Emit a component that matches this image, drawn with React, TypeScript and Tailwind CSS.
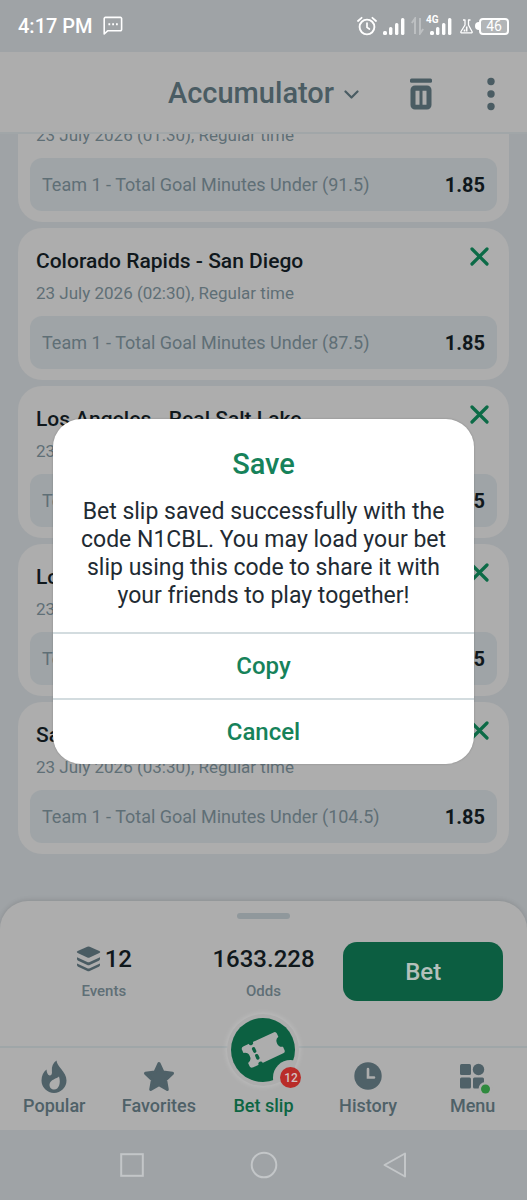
import { ReactNode } from "react";

type Bet = {
  id: number;
  teams: string;
  time: string;
  limit: string;
  odds: string;
};

const bets: Bet[] = [
  { id: 1, teams: "Austin - Seattle Sounders", time: "01:30", limit: "91.5", odds: "1.85" },
  { id: 2, teams: "Colorado Rapids - San Diego", time: "02:30", limit: "87.5", odds: "1.85" },
  { id: 3, teams: "Los Angeles - Real Salt Lake", time: "02:30", limit: "91.5", odds: "1.85" },
  { id: 4, teams: "Los Angeles - Portland", time: "02:30", limit: "91.5", odds: "1.85" },
  { id: 5, teams: "San Jose - Vancouver", time: "03:30", limit: "104.5", odds: "1.85" },
];

const Signal = () => (
  <svg width="22" height="17" viewBox="0 0 22 17" fill="currentColor">
    <rect x="0" y="13" width="4" height="4" rx="1.5" />
    <rect x="6" y="9" width="3.4" height="8" rx="1.5" />
    <rect x="12" y="5" width="3.4" height="12" rx="1.5" />
    <rect x="18" y="0" width="3.4" height="17" rx="1.5" />
  </svg>
);

const StatusBar = () => (
  <div className="flex h-[52px] items-center justify-between px-[18px] text-white">
    <div className="flex items-center gap-2.5">
      <span className="text-xl font-medium">4:17 PM</span>
      <svg width="20" height="20" viewBox="0 0 20 20" fill="none" stroke="currentColor">
        <path d="M1.2 18V2.6A1.2 1.2 0 0 1 2.4 1.4h15a1.2 1.2 0 0 1 1.2 1.2v11a1.2 1.2 0 0 1-1.2 1.2H4.6z" strokeWidth="1.6" strokeLinejoin="round" />
        <path d="M5.4 8.2h1.8M9.2 8.2H11M13 8.2h1.8" strokeWidth="2" />
      </svg>
    </div>
    <div className="flex items-center">
      <svg width="20" height="20" viewBox="0 0 20 20" fill="none" stroke="currentColor" strokeLinecap="round">
        <circle cx="10" cy="11" r="7.4" strokeWidth="1.9" />
        <path d="M10 7v4.4l2.4 1.6" strokeWidth="1.7" />
        <path d="M1 5l3.6-3.2M19 5l-3.6-3.2" strokeWidth="1.8" />
      </svg>
      <span className="ml-1.5">
        <Signal />
      </span>
      <svg className="ml-1.5 opacity-30" width="13" height="18" viewBox="0 0 13 18" fill="none" stroke="currentColor" strokeWidth="2">
        <path d="M0.8 6L4 1.5V17M12.2 12L9 16.5V1" />
      </svg>
      <span className="relative ml-1.5">
        <Signal />
        <span className="absolute -top-1 -left-1 text-[10px] leading-3 font-bold">4G</span>
      </span>
      <svg className="ml-2" width="13" height="15" viewBox="0 0 13 15" fill="none" stroke="currentColor" strokeWidth="1.3" strokeLinejoin="round">
        <path d="M3 1h2v5L1 12.5q-.6 1.4 1 1.4h9q1.6 0 1-1.4L8.5 6V1h2" />
        <path d="M6.7 7.5v5M4.5 10.500v2" strokeWidth="1.6" />
      </svg>
      <span className="ml-0.5 h-2 w-1 rounded-l-sm bg-white" />
      <span className="flex h-[17px] w-[30px] items-center justify-center rounded border-2 border-white bg-white/20 text-sm leading-3">
        46
      </span>
    </div>
  </div>
);

const Header = () => (
  <header className="relative z-10 flex h-[82px] items-center border-b-2 border-[#a1a6a8] bg-[#adadad] pt-1 text-[#4a5c63]">
    <div className="flex-1 pl-8" />
    <button className="flex items-center gap-2.5 text-[29px] font-medium">
      Accumulator
      <svg width="15" height="9" viewBox="0 0 15 9" fill="none" stroke="currentColor" strokeWidth="2.2" strokeLinecap="round" strokeLinejoin="round">
        <path d="M1.5 1.500l6 6 6-6" />
      </svg>
    </button>
    <div className="flex flex-1 items-center justify-end gap-[55px] pr-8">
      <button aria-label="Clear bet slip">
        <svg width="22" height="32" viewBox="0 0 22 32" fill="currentColor">
          <rect x="0" y="0.5" width="22" height="4.2" rx="1.5" />
          <path fillRule="evenodd" d="M5 7.5h12a4.5 4.5 0 0 1 4.500 4.500v15a4.5 4.5 0 0 1-4.500 4.500H5A4.5 4.5 0 0 1 .5 27V12A4.5 4.5 0 0 1 5 7.5zM5.5 12.700v14h4v-14zM12.5 12.700v14h4v-14z" />
        </svg>
      </button>
      <button aria-label="More options">
        <svg width="8" height="34" viewBox="0 0 8 34" fill="currentColor">
          <circle cx="4" cy="4.5" r="3.7" />
          <circle cx="4" cy="17" r="3.7" />
          <circle cx="4" cy="29.5" r="3.7" />
        </svg>
      </button>
    </div>
  </header>
);

const BetCard = ({ bet }: { bet: Bet }) => (
  <li className="rounded-3xl bg-[#adadad] px-3 pt-[19px] pb-[11px]">
    <div className="flex items-start justify-between pr-2 pl-1.5">
      <div>
        <h3 className="text-[21px] leading-7 font-medium text-[#10181c]">{bet.teams}</h3>
        <p className="mt-1 text-[17px] leading-7 text-[#5f6f76]">
          23 July 2026 ({bet.time}), Regular time
        </p>
      </div>
      <button aria-label={`Remove ${bet.teams}`} className="text-[#0c6b47]">
        <svg width="19" height="19" viewBox="0 0 19 19" fill="none" stroke="currentColor" strokeWidth="3.2" strokeLinecap="round">
          <path d="M2 2l15 15M17 2L2 17" />
        </svg>
      </button>
    </div>
    <div className="mt-[9px] flex h-[53px] items-center justify-between rounded-xl bg-[#9fa4a7] px-3">
      <span className="text-lg text-[#5f6f76]">Team 1 - Total Goal Minutes Under ({bet.limit})</span>
      <span className="text-xl font-bold text-[#10181c]">{bet.odds}</span>
    </div>
  </li>
);

const Summary = () => (
  <div className="mt-[23px] grid grid-cols-3 items-center px-6 pb-[45px]">
    <div className="flex flex-col items-center">
      <div className="flex items-center gap-1 text-2xl leading-8 font-medium text-[#10181c]">
        <svg width="25" height="26" viewBox="0 0 25 26" className="text-[#4a5c63]" fill="currentColor">
          <path d="M11.3.7q1.200-.5 2.400 0l9.600 4.300q1.800 1 0 2l-9.600 4.600q-1.200.5-2.400 0L1.700 7Q0 6 1.700 5z" />
          <path d="M1 11.300l10.300 4.800q1.200.5 2.400 0L24 11.300v1.700q0 1.200-1.200 1.800l-9.100 4.300q-1.200.5-2.400 0l-9.100-4.300Q1 14.200 1 13z" />
          <path d="M1 17.500l10.300 4.800q1.200.5 2.400 0L24 17.500v1.500q0 1.200-1.200 1.800l-9.100 4.300q-1.200.5-2.400 0l-9.100-4.300Q1 20.200 1 19z" />
        </svg>
        12
      </div>
      <span className="mt-1.5 text-[15px] leading-5 font-medium text-[#5f6f76]">Events</span>
    </div>
    <div className="flex flex-col items-center">
      <span className="text-2xl leading-8 font-medium text-[#10181c]">1633.228</span>
      <span className="mt-1.5 text-[15px] leading-5 font-medium text-[#5f6f76]">Odds</span>
    </div>
    <button className="h-[59px] rounded-[14px] bg-[#0c5e41] text-2xl font-medium text-[#b4c0bb]">Bet</button>
  </div>
);

const NavItem = ({ label, children }: { label: string; children: ReactNode }) => (
  <a href="#" className="flex flex-col items-center text-lg leading-6 font-medium text-[#4f6168]">
    <span className="flex h-9 items-center">{children}</span>
    <span>{label}</span>
  </a>
);

const BottomNav = () => (
  <nav className="grid h-[84px] grid-cols-5 border-t-2 border-[#9fa6a8] px-0.5 pt-[10px]">
    <NavItem label="Popular">
      <svg width="26" height="33" viewBox="0 0 26 33" fill="currentColor">
        <path fillRule="evenodd" d="M15.5.5C15.8 7 25.5 11.5 25.5 20.500A12.5 12.5 0 0 1 .5 20.500C.5 15.500 2.500 12 5.500 9.500 5.700 12.500 6.500 14.700 8.500 15.500 10.800 15.500 11.200 13.500 10.900 11 10.500 6.500 12 3 15.500.5zM18 16.500C16 18.500 9 19.500 8.500 24.500 8.300 27.500 10.500 29.500 13.200 29.500 18 29.500 20 23 18 16.500z" />
      </svg>
    </NavItem>
    <NavItem label="Favorites">
      <svg width="32" height="31" viewBox="0 0 32 31" fill="currentColor" stroke="currentColor" strokeWidth="3" strokeLinejoin="round">
        <path d="M16 2.500l4 8.600 9.500 1.200-6.900 6.500 1.700 9.600L16 23.600l-8.300 4.800 1.700-9.600-6.900-6.500 9.500-1.200z" />
      </svg>
    </NavItem>
    <a href="#" className="relative flex flex-col items-center text-lg leading-6 font-medium text-[#0c6543]">
      <span className="absolute -top-11 rounded-full bg-[#adadad] p-1 shadow-[0_0_6px_rgba(255,255,255,0.25)]">
        <svg width="64" height="64" viewBox="0 0 64 64">
          <circle cx="32" cy="32" r="32" fill="#0c6041" />
          <g transform="rotate(-25 32 32)">
            <path
              fill="#adadad"
              d="M16 20.500h33q2.500 0 2.500 2.500v3.500q-4 1-4 5.500t4 5.500V41q0 2.500-2.500 2.500H16q-3 0-3-2.500v-3.500q4.500-1 4.500-5.500T13 26.500V23q0-2.500 3-2.500z"
            />
            <circle cx="24" cy="20.500" r="2.300" fill="#0c6041" />
            <circle cx="24" cy="43.500" r="2.300" fill="#0c6041" />
            <path d="M24 27v2.500M24 34.500v2.500" stroke="#0c6041" strokeWidth="3.400" strokeLinecap="round" />
          </g>
          <circle cx="59.500" cy="59.500" r="17.500" fill="#adadad" />
        </svg>
        <span className="absolute -right-0.5 -bottom-0.5 flex size-[21px] items-center justify-center rounded-full bg-[#b92c29] text-xs font-medium text-[#d4c0c0]">
          12
        </span>
      </span>
      <span className="mt-9">Bet slip</span>
    </a>
    <NavItem label="History">
      <svg width="28" height="28" viewBox="0 0 28 28">
        <circle cx="14" cy="14" r="13.700" fill="currentColor" />
        <path d="M14 7v8.500h6" fill="none" stroke="#adadad" strokeWidth="2.600" strokeLinecap="round" />
      </svg>
    </NavItem>
    <NavItem label="Menu">
      <svg className="overflow-visible" width="32" height="32" viewBox="0 0 32 32" fill="currentColor">
        <rect x="3" y="4" width="11" height="11" rx="1.500" />
        <circle cx="21.500" cy="9.500" r="5.700" />
        <rect x="3" y="17.500" width="11" height="11" rx="1.500" />
        <rect x="16" y="17.500" width="11" height="11" rx="1.500" />
        <circle cx="28.500" cy="29" r="7" fill="#adadad" />
        <circle cx="28.500" cy="29" r="4.500" className="fill-[#2f8a3e]" />
      </svg>
    </NavItem>
  </nav>
);

const SystemBar = () => (
  <div className="bg-[#9fa3a6]">
    <div className="mx-auto grid h-[70px] w-3/4 grid-cols-3 place-items-center text-[#c3c6c8]">
      <button aria-label="Recent apps">
        <svg width="24" height="24" viewBox="0 0 24 24" fill="none" stroke="currentColor" strokeWidth="2">
          <rect x="1.200" y="1.200" width="21.600" height="21.600" />
        </svg>
      </button>
      <button aria-label="Home">
        <svg width="28" height="28" viewBox="0 0 28 28" fill="none" stroke="currentColor" strokeWidth="2">
          <circle cx="14" cy="14" r="12.300" />
        </svg>
      </button>
      <button aria-label="Back">
        <svg width="24" height="26" viewBox="0 0 24 26" fill="none" stroke="currentColor" strokeWidth="2" strokeLinejoin="round">
          <path d="M22 1.500v23L1.500 13z" />
        </svg>
      </button>
    </div>
  </div>
);

const SaveDialog = () => (
  <div className="absolute inset-0 z-20 flex items-center justify-center pb-[18px]">
    <div
      role="dialog"
      aria-labelledby="save-title"
      className="w-4/5 overflow-hidden rounded-[28px] bg-white text-center shadow-[0_0_2px_rgba(0,0,0,0.25)]"
    >
      <div className="px-5 pt-[27px] pb-[22px]">
        <h2 id="save-title" className="text-[29px] leading-9 font-medium text-[#16825a]">
          Save
        </h2>
        <p className="mt-4 text-[23px] leading-7 text-[#1f2b33]">
          Bet slip saved successfully with the code N1CBL. You may load your bet slip using this code to share it with
          your friends to play together!
        </p>
      </div>
      <button className="block h-[66px] w-full border-t-2 border-[#d3dcdf] text-2xl font-medium text-[#16825a]">
        Copy
      </button>
      <button className="block h-[66px] w-full border-t-2 border-[#d3dcdf] text-2xl font-medium text-[#16825a]">
        Cancel
      </button>
    </div>
  </div>
);

const App = () => {
  return (
    <div className="relative flex min-h-screen flex-col bg-[#9fa3a6] font-[Roboto,sans-serif]">
      <StatusBar />
      <Header />
      <main className="flex-1 overflow-hidden px-[18px] pb-[47px]">
        <ul className="-mt-16 flex flex-col gap-1.5">
          {bets.map((bet) => (
            <BetCard key={bet.id} bet={bet} />
          ))}
        </ul>
      </main>
      <section className="rounded-t-[28px] bg-[#adadad] pt-3 shadow-[0_-1px_5px_rgba(0,0,0,0.12)]">
        <div className="mx-auto h-1.5 w-[53px] rounded-full bg-[#90989c]" />
        <Summary />
        <BottomNav />
      </section>
      <SystemBar />
      <SaveDialog />
    </div>
  );
};

export default App;
